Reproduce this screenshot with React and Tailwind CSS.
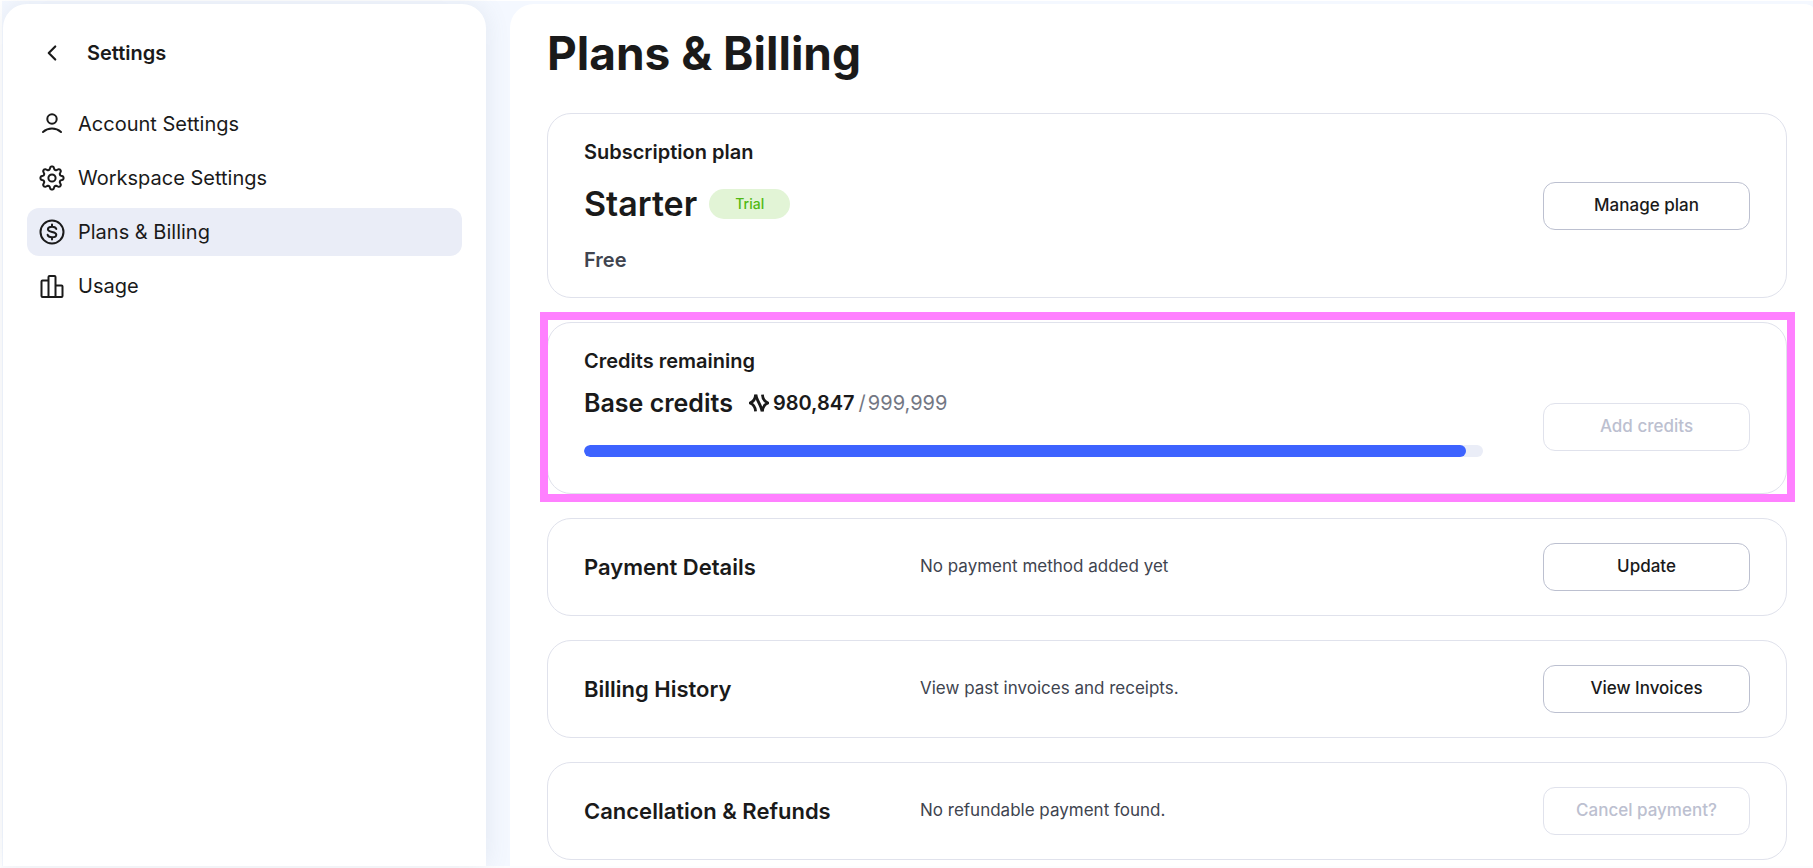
import { ChevronLeft } from "lucide-react";

const iconProps = {
  width: 26,
  height: 26,
  viewBox: "0 0 26 26",
  fill: "none",
  stroke: "currentColor",
  strokeWidth: 2,
  strokeLinecap: "round",
  strokeLinejoin: "round",
  "aria-hidden": true,
};

function UserIcon() {
  return (
    <svg {...iconProps}>
      <circle cx="13" cy="8" r="4.700" />
      <path d="M4 21C6.400 18.900 9.500 17.600 13 17.600s6.600 1.300 9 3.400" />
    </svg>
  );
}

function gearPath() {
  const teeth = 8;
  const points = [];
  for (let i = 0; i <= 96; i++) {
    const a = (i / 96) * Math.PI * 2;
    const wave = Math.cos(a * teeth);
    const r = 10.1 + 1.6 * Math.tanh(wave * 1.6);
    points.push(`${(13 + r * Math.sin(a)).toFixed(2)} ${(13 - r * Math.cos(a)).toFixed(2)}`);
  }
  return `M${points.join("L")}Z`;
}

function GearIcon() {
  return (
    <svg {...iconProps}>
      <path d={gearPath()} />
      <circle cx="13" cy="13" r="3.600" />
    </svg>
  );
}

function DollarIcon() {
  return (
    <svg {...iconProps}>
      <circle cx="13" cy="13" r="11.500" />
      <path d="M17.300 10C16.900 8.500 15.400 7.700 13.100 7.700c-2.500 0-4.200 1-4.200 2.600 0 3.800 8.400 1.600 8.400 5.400 0 1.600-1.700 2.600-4.300 2.600-2.400 0-4-.900-4.400-2.500M13 5.600v2.100M13 18.300v2.100" />
    </svg>
  );
}

function UsageIcon() {
  return (
    <svg {...iconProps}>
      <path d="M9.500 24H3.500a1 1 0 0 1-1-1V8.500a1 1 0 0 1 1-1H9.500M9.500 24V4a1 1 0 0 1 1-1h5a1 1 0 0 1 1 1v20M9.500 24h7M16.500 12.500h6a1 1 0 0 1 1 1V23a1 1 0 0 1-1 1h-6" />
    </svg>
  );
}

function CreditsIcon() {
  return (
    <svg
      width="20"
      height="18"
      viewBox="0 0 20 18"
      fill="none"
      stroke="currentColor"
      strokeWidth="2.800"
      aria-hidden="true"
    >
      <path d="M6.600 .600C6.400 4.700 4.800 7.500 1 9C4.800 10.500 6.400 13.300 6.600 17.400" />
      <path d="M13.400 .600C13.600 4.700 15.200 7.500 19 9C15.200 10.500 13.600 13.300 13.400 17.400" />
      <path d="M7 .600C7.200 6 12.800 12 13 17.400" />
    </svg>
  );
}

const navItems = [
  { label: "Account Settings", Icon: UserIcon },
  { label: "Workspace Settings", Icon: GearIcon },
  { label: "Plans & Billing", Icon: DollarIcon, active: true },
  { label: "Usage", Icon: UsageIcon },
];

function Sidebar() {
  return (
    <aside className="w-[483px] shrink-0 rounded-t-3xl bg-white px-6 pt-[29px] shadow-[0_0_24px_rgba(100,116,139,0.12)]">
      <div className="flex h-10 items-center gap-[22px] pl-3">
        <button type="button" aria-label="Back" className="flex size-[26px] items-center justify-center">
          <ChevronLeft size={28} strokeWidth={2} />
        </button>
        <h2 className="text-xl font-semibold">Settings</h2>
      </div>
      <nav className="mt-[27px] flex flex-col gap-1.5">
        {navItems.map(({ label, Icon, active }) => (
          <a
            key={label}
            href="#"
            aria-current={active ? "page" : undefined}
            className={`flex h-12 items-center gap-[13px] rounded-xl px-3 text-xl ${active ? "bg-[#eaedf7]" : ""}`}
          >
            <Icon />
            {label}
          </a>
        ))}
      </nav>
    </aside>
  );
}

function ActionButton({ children, disabled, className = "" }) {
  return (
    <button
      type="button"
      disabled={disabled}
      className={`h-12 w-[207px] shrink-0 rounded-xl border border-[#bcc0d0] text-[17px] font-medium disabled:border-[#e0e2ec] disabled:text-[#bcc0d0] ${className}`}
    >
      {children}
    </button>
  );
}

function DetailRow({ title, text, action, disabled }) {
  return (
    <section className="flex h-[98px] items-center rounded-3xl border border-[#e0e2ec] px-9">
      <h2 className="w-[336px] shrink-0 text-[22px] font-semibold">{title}</h2>
      <p className="flex-1 text-[17px] text-[#40444f]">{text}</p>
      <ActionButton disabled={disabled}>{action}</ActionButton>
    </section>
  );
}

export default function App() {
  const remaining = 980847;
  const total = 999999;
  return (
    <div className="flex min-h-screen gap-6 border-t border-b-2 border-l-2 border-t-white border-b-[#fcfcfe] border-l-white bg-[#f4f8ff] pt-[3px] pl-px font-['Inter',sans-serif] text-[#1a1a1a]">
      <Sidebar />
      <main className="min-w-0 flex-1 rounded-tl-3xl rounded-tr-[10px_4px] bg-white pt-[19px] pr-[26px] pl-[37px]">
        <h1 className="text-[46px] leading-[60px] font-bold">Plans &amp; Billing</h1>
        <div className="mt-[30px] flex flex-col gap-6">
          <section className="flex items-center justify-between rounded-3xl border border-[#e0e2ec] px-9 pt-6 pb-[23px]">
            <div>
              <h2 className="text-xl leading-7 font-semibold">Subscription plan</h2>
              <div className="mt-4 flex items-center gap-3">
                <p className="text-[34px] leading-[44px] font-semibold">Starter</p>
                <span className="flex h-[30px] w-[81px] items-center justify-center rounded-full bg-[#e2f4d6] text-sm font-medium text-[#52b913]">
                  Trial
                </span>
              </div>
              <p className="mt-5 text-xl leading-7 font-semibold text-[#40444f]">Free</p>
            </div>
            <ActionButton>Manage plan</ActionButton>
          </section>
          <section className="relative flex items-end rounded-3xl border border-[#e0e2ec] px-9 pt-6 pb-9">
            <div className="pointer-events-none absolute -top-[11px] -right-[9px] -bottom-[9px] -left-2 border-8 border-[#ff80ff]" />
            <div className="mr-[60px] min-w-0 flex-1">
              <h2 className="text-xl leading-7 font-semibold">Credits remaining</h2>
              <div className="mt-2 flex items-center">
                <p className="text-[25px] leading-10 font-semibold">Base credits</p>
                <div className="ml-4 flex items-center text-xl">
                  <CreditsIcon />
                  <span className="ml-1 font-semibold">{remaining.toLocaleString("en-US")}</span>
                  <span className="ml-1 text-[#737784]">/</span>
                  <span className="ml-0.5 text-[#737784]">{total.toLocaleString("en-US")}</span>
                </div>
              </div>
              <div className="mt-[22px] h-3 overflow-hidden rounded-full bg-[#eaedf7]">
                <div
                  className="h-full rounded-full bg-[#3d63ff]"
                  style={{ width: `${(remaining / total) * 100}%` }}
                />
              </div>
            </div>
            <ActionButton disabled className="mb-1.5">
              Add credits
            </ActionButton>
          </section>
          <DetailRow title="Payment Details" text="No payment method added yet" action="Update" />
          <DetailRow title="Billing History" text="View past invoices and receipts." action="View Invoices" />
          <DetailRow
            title="Cancellation & Refunds"
            text="No refundable payment found."
            action="Cancel payment?"
            disabled
          />
        </div>
      </main>
    </div>
  );
}
